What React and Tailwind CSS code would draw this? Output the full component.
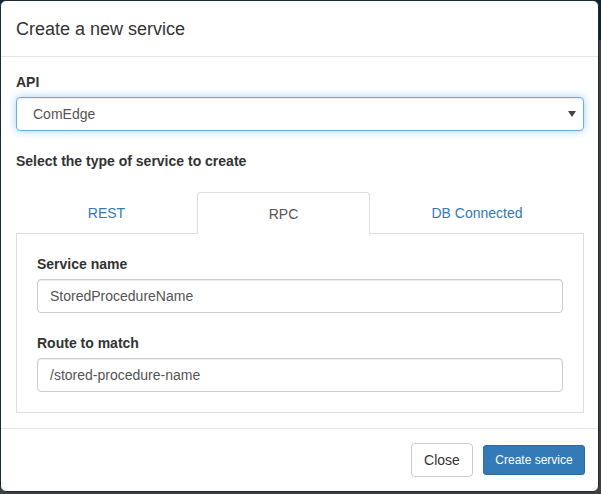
import React from "react";

const tabs = [
  { label: "REST", width: "w-[181px]" },
  { label: "RPC", width: "w-[173px]", active: true },
  { label: "DB Connected", width: "w-[214px]" },
];

function Field({ label, value, last }) {
  return (
    <div className={last ? "" : "mb-[20px]"}>
      <div className="h-[20px] leading-[20px] text-[14px] font-bold text-[#333] mb-[5px]">
        {label}
      </div>
      <div className="h-[34px] w-[526px] border border-[#ccc] rounded-[4px] px-[12px] flex items-center text-[14px] text-[#555] shadow-[inset_0_1px_1px_rgba(0,0,0,0.075)]">
        {value}
      </div>
    </div>
  );
}

export default function App() {
  return (
    <div
      className="w-[601px] h-[494px] bg-[#3f3f3f] overflow-hidden"
      style={{ fontFamily: '"Liberation Sans", Arial, sans-serif' }}
    >
      <div className="bg-[#0d2434] h-[40px] -mb-[40px]" />
      <div className="relative w-[599px] h-[492px] bg-white border border-[#1a2a35] rounded-[6px] flex flex-col">
        {/* header */}
        <div className="h-[56px] border-b border-[#e5e5e5] px-[15px] flex items-center">
          <h4 className="text-[18px] text-[#333] leading-[26px]">
            Create a new service
          </h4>
        </div>

        {/* body */}
        <div className="h-[371px] pl-[15px] pr-[14px] pt-[15px]">
          <div className="h-[20px] leading-[20px] text-[14px] font-bold text-[#333] mb-[5px]">
            API
          </div>
          <div className="h-[34px] w-[568px] border border-[#66afe9] rounded-[4px] pl-[16px] pr-[7px] flex items-center justify-between text-[14px] text-[#555] shadow-[inset_0_1px_1px_rgba(0,0,0,0.075),0_0_8px_rgba(102,175,233,0.6)]">
            <span>ComEdge</span>
            <svg width="8" height="6" viewBox="0 0 8 6">
              <path d="M0 0 L8 0 L4 6 Z" fill="#444" />
            </svg>
          </div>

          <div className="mt-[20px] h-[20px] leading-[20px] text-[14px] font-bold text-[#333]">
            Select the type of service to create
          </div>

          {/* tabs */}
          <div className="mt-[21px] flex w-[568px]">
            {tabs.map((t) =>
              t.active ? (
                <div
                  key={t.label}
                  className={`${t.width} h-[42px] pt-[2px] border-t border-x border-[#ddd] rounded-t-[4px] flex items-center justify-center text-[14px] text-[#555]`}
                >
                  {t.label}
                </div>
              ) : (
                <div
                  key={t.label}
                  className={`${t.width} h-[42px] pt-[2px] border-b border-[#ddd] flex items-center justify-center text-[14px] text-[#337ab7]`}
                >
                  {t.label}
                </div>
              )
            )}
          </div>
          <div className="w-[568px] h-[179px] border-x border-b border-[#ddd] pt-[20px] pl-[20px]">
            <Field label="Service name" value="StoredProcedureName" />
            <Field label="Route to match" value="/stored-procedure-name" last />
          </div>
        </div>

        {/* footer */}
        <div className="flex-1 border-t border-[#e5e5e5] pr-[13px] flex items-center justify-end gap-[10px]">
          <button className="h-[34px] w-[62px] border border-[#ccc] rounded-[4px] bg-white text-[14px] text-[#333]">
            Close
          </button>
          <button className="h-[30px] w-[102px] border border-[#2e6da4] rounded-[3px] bg-[#337ab7] text-[12px] text-white">
            Create service
          </button>
        </div>
      </div>
    </div>
  );
}
